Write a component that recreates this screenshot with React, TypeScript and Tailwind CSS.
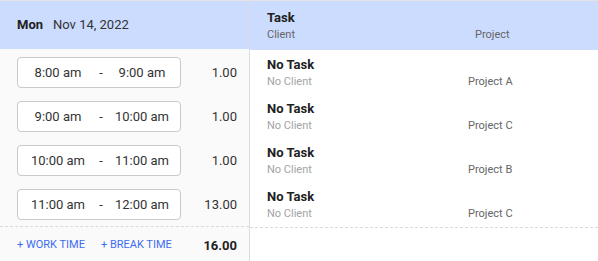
import React from "react";

const rows = [
  { start: "8:00 am", end: "9:00 am", hours: "1.00", project: "Project A" },
  { start: "9:00 am", end: "10:00 am", hours: "1.00", project: "Project C" },
  { start: "10:00 am", end: "11:00 am", hours: "1.00", project: "Project B" },
  { start: "11:00 am", end: "12:00 am", hours: "13.00", project: "Project C" },
];

export default function App() {
  return (
    <div
      className="w-[598px] h-[261px] bg-white border-t border-[#e3e3e3] text-[#212121] overflow-hidden"
      style={{ fontFamily: "Roboto, 'Liberation Sans', sans-serif" }}
    >
      <div className="flex h-full">
        {/* Left column */}
        <div className="w-[250px] shrink-0 bg-[#fafafa] border-r border-[#dcdcdc] flex flex-col">
          <div className="h-[49px] bg-[#ccdcff] flex items-center pl-[17px] text-[13px]">
            <span className="font-bold">Mon</span>
            <span className="ml-[10px] text-[#333]">Nov 14, 2022</span>
          </div>
          <div className="flex flex-col pt-[8px] gap-[13px]">
            {rows.map((r, i) => (
              <div key={i} className="flex items-center h-[31px] pl-[17px] pr-[12px]">
                <div className="w-[164px] h-[31px] rounded-[4px] border border-[#c9c9c9] bg-white flex items-center text-[13px] text-[#333]">
                  <span className="w-[80px] text-center">{r.start}</span>
                  <span className="w-[6px] text-center">-</span>
                  <span className="flex-1 text-center">{r.end}</span>
                </div>
                <span className="flex-1 text-right text-[13px] text-[#333]">{r.hours}</span>
              </div>
            ))}
          </div>
          <div className="mt-[6px] border-t border-dashed border-[#dadada] h-[36px] pt-[3px] flex items-center pl-[17px] pr-[12px] text-[11px]">
            <span className="text-[#3d6cf0]">+ WORK TIME</span>
            <span className="ml-[16px] text-[#3d6cf0]">+ BREAK TIME</span>
            <span className="flex-1 text-right text-[13px] font-bold">16.00</span>
          </div>
        </div>
        {/* Right column */}
        <div className="flex-1 flex flex-col">
          <div className="h-[49px] bg-[#ccdcff] pl-[17px] pt-[8px]">
            <div className="text-[13px] font-bold leading-[17px]">Task</div>
            <div className="flex text-[11px] text-[#666] leading-[16px] mt-[1px]">
              <span className="w-[208px]">Client</span>
              <span>Project</span>
            </div>
          </div>
          <div className="flex flex-col pt-[6px] gap-[10px] pl-[17px]">
            {rows.map((r, i) => (
              <div key={i} className="h-[34px]">
                <div className="text-[13px] font-bold leading-[17px]">No Task</div>
                <div className="flex text-[11px] leading-[16px] mt-[1px]">
                  <span className="w-[201px] text-[#a3a3a3]">No Client</span>
                  <span className="text-[#666]">{r.project}</span>
                </div>
              </div>
            ))}
          </div>
          <div className="mt-[5px] border-t border-dashed border-[#dadada]" />
        </div>
      </div>
    </div>
  );
}
